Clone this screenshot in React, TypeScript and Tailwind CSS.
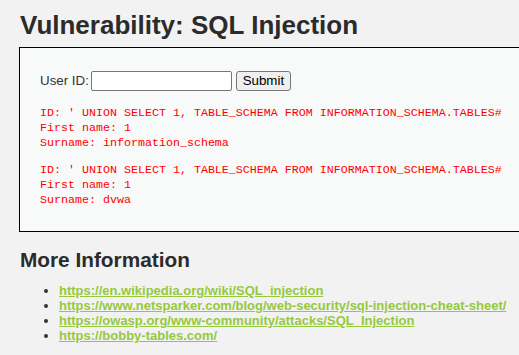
const rows = [
    { id: "' UNION SELECT 1, TABLE_SCHEMA FROM INFORMATION_SCHEMA.TABLES#", first: "1", surname: "information_schema" },
    { id: "' UNION SELECT 1, TABLE_SCHEMA FROM INFORMATION_SCHEMA.TABLES#", first: "1", surname: "dvwa" },
];

const links = [
    "https://en.wikipedia.org/wiki/SQL_injection",
    "https://www.netsparker.com/blog/web-security/sql-injection-cheat-sheet/",
    "https://owasp.org/www-community/attacks/SQL_Injection",
    "https://bobby-tables.com/",
];

export default function App() {
    return (
        <div
            className="w-[519px] h-[355px] overflow-hidden bg-[#f2f2f2] text-[#333333]"
            style={{ fontFamily: "'Liberation Sans', Arial, sans-serif" }}
        >
            <div className="pl-5">
                {/* Title */}
                <h1 className="pt-[10px] text-[26px] leading-[30px] font-bold text-[#2b2b2b]">
                    Vulnerability: SQL Injection
                </h1>

                {/* Vulnerable code area */}
                <div className="mt-[7px] -ml-px w-[540px] border border-black bg-[#f8f9f9] pl-5 pt-[23px] pb-[23px]">
                    <form className="flex items-center text-[13.33px]" onSubmit={(e) => e.preventDefault()}>
                        <label className="mr-[2px] text-[#333333]">User ID:</label>
                        <input
                            type="text"
                            className="w-[141px] h-[20px] border border-[#767676] rounded-[2px] bg-white px-1 outline-none"
                        />
                        <button
                            type="submit"
                            className="ml-1 w-[55px] h-[20px] border border-[#767676] rounded-[3px] bg-[#efefef] text-[13.33px] leading-none text-black"
                        >
                            Submit
                        </button>
                    </form>

                    <div className="mt-[15px] flex flex-col gap-[12px]">
                        {rows.map((r, i) => (
                            <pre
                                key={i}
                                className="text-[11.67px] leading-[15px] text-[#ff0000]"
                                style={{ fontFamily: "'Liberation Mono', 'Courier New', monospace" }}
                            >
                                {`ID: ${r.id}\nFirst name: ${r.first}\nSurname: ${r.surname}`}
                            </pre>
                        ))}
                    </div>
                </div>

                {/* More info */}
                <h2 className="mt-[16px] text-[20.8px] leading-[24px] font-bold text-[#2b2b2b]">More Information</h2>
                <ul className="mt-[11px] list-disc pl-[39px] text-[13px] leading-[15px] font-bold marker:text-[#333333]">
                    {links.map((l) => (
                        <li key={l}>
                            <a href="#" className="text-[#95c93d] underline">
                                {l}
                            </a>
                        </li>
                    ))}
                </ul>
            </div>
        </div>
    );
}
